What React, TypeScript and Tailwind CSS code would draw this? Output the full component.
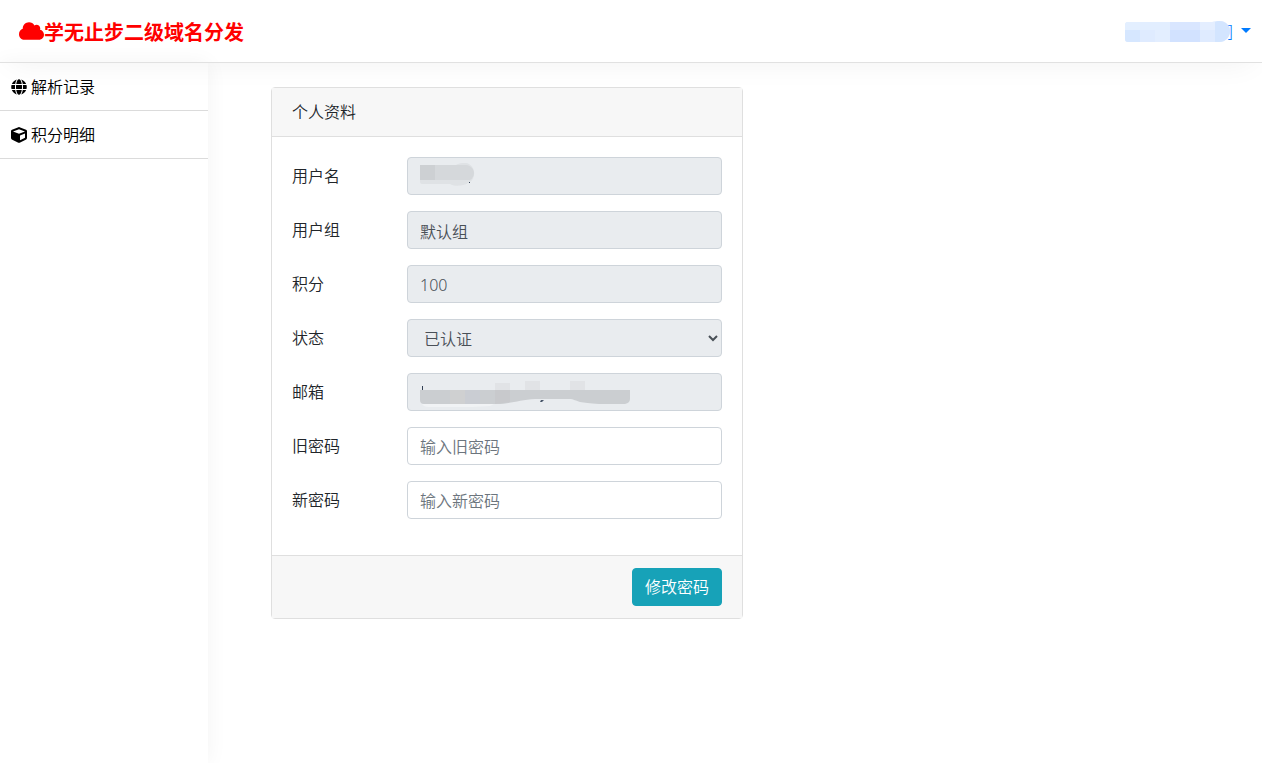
import React from 'react'
import { FaCloud, FaCube, FaGlobe } from 'react-icons/fa'

const control =
  'block w-full h-[38px] rounded border border-[#ced4da] bg-white px-3 pt-[7px] pb-[5px] text-base font-[350] leading-6 text-[#495057] placeholder:text-[#6c757d] placeholder:opacity-100 disabled:bg-[#e9ecef] disabled:opacity-100'

const links = [
  { label: '解析记录', href: '#records', icon: FaGlobe },
  { label: '积分明细', href: '#points', icon: FaCube },
]

function UserMask() {
  return (
    <svg width="105" height="21" viewBox="0 0 105 21" aria-hidden="true">
      <path d="M3 1h84c2-1 6-1 8-1 6 0 10 5 10 10s-4 11-11 11H3q-3 0-3-3V4q0-3 3-3z" fill="#dfebff" />
      <path d="M3 1h12v8H0V4q0-3 3-3z" fill="#e3efff" />
      <path d="M0 9h15v12H3q-3 0-3-3z" fill="#d6e7ff" />
      <path d="M15 1h30v8H15z" fill="#e2eeff" />
      <path d="M30 9h15v12H30z" fill="#e3eeff" />
      <path d="M45 1h30v8H45z" fill="#d9e6ff" />
      <path d="M45 9h30v12H45z" fill="#d2e2ff" />
      <path d="M75 1h15v8H75z" fill="#e4eeff" />
      <path d="M90 1c7-3 15 2 15 9 0 6-4 11-11 11h-4z" fill="#d3e5ff" />
    </svg>
  )
}

function NameMask() {
  return (
    <svg className="absolute left-[13px] top-1.5" width="56" height="24" viewBox="0 0 56 24" aria-hidden="true">
      <path d="M0 2h36c3-2 10-3 13-1 7 4 7 16-1 19-4 3-14 4-18 1H2q-2 0-2-2z" fill="#dfe2e5" />
      <path d="M0 2h46c4 0 8 4 8 8 0 3-2 6-4 7H0z" fill="#d5d8db" />
      <path d="M0 2h15v15H0z" fill="#cdd0d3" />
      <path d="M49 19h1v1h-1z" fill="#334155" />
    </svg>
  )
}

function MailMask() {
  return (
    <svg className="absolute left-[13px] top-1.5" width="212" height="30" viewBox="0 0 212 30" aria-hidden="true">
      <path d="M2 25h72l-4 2-18 1H8q-4 0-6-3z" fill="#f1f3f5" />
      <path d="M75 4h15v7H75zM105 2h15v9h-15zM150 2h15v9h-15z" fill="#e1e3e6" />
      <path d="M2 7h1v4H2z" fill="#334155" />
      <path d="M0 11h210v9q0 4-5 5h-26c-10-1-14-1-19-2-4-1-6-3-11-3h-34c-16 1-26 5-38 5H4q-4 0-4-4z" fill="#cbced1" />
      <path d="M30 11h15v14H30z" fill="#cfd0d1" />
      <path d="M45 11h15v14H45z" fill="#cacdd3" />
      <path d="M75 11h15v12l-15 2z" fill="#c8c9cc" />
      <path d="M121 21h3l-2 2h-2z" fill="#475569" />
    </svg>
  )
}

function Row(props: { id: string; label: string; children: React.ReactNode }) {
  return (
    <div className="-mx-[15px] mb-4 flex">
      <label htmlFor={props.id} className="w-1/4 px-[15px] py-[7px] leading-6">
        {props.label}
      </label>
      <div className="w-3/4 px-[15px]">
        <div className="relative">{props.children}</div>
      </div>
    </div>
  )
}

export default function App() {
  return (
    <div
      className="flex min-h-screen flex-col bg-white text-base font-[350] text-[#212529]"
      style={{ fontFamily: '"Noto Sans", "Noto Sans CJK SC", sans-serif' }}
    >
      <header className="relative z-10 flex h-[63px] items-center justify-between border-b border-[#e1e1e1] pl-[19px] pr-[11px] shadow-[0_10px_30px_-10px_rgba(0,0,0,0.06)]">
        <a href="#home" className="flex items-center text-xl font-bold text-[#ff0000]">
          <FaCloud className="h-5 w-[25px]" />
          <span className="pt-1">学无止步二级域名分发</span>
        </a>
        <button type="button" aria-label="用户菜单" className="flex items-center text-[#007bff]">
          <UserMask />
          <span className="-ml-0.5">]</span>
          <svg className="mb-0.5 ml-2" width="10" height="5" viewBox="0 0 10 5" aria-hidden="true">
            <path d="M0 0h10L5 5z" fill="currentColor" />
          </svg>
        </button>
      </header>
      <div className="flex flex-1">
        <nav className="w-52 shrink-0 shadow-[0_0_20px_rgba(0,0,0,0.05)]">
          {links.map((link) => (
            <a
              key={link.href}
              href={link.href}
              className="flex h-12 items-center gap-1 border-b border-[#dbdbdb] px-[11px] text-black"
            >
              <link.icon className="h-4 w-4" />
              {link.label}
            </a>
          ))}
        </nav>
        <main className="flex-1 pl-12 pr-0.5 pt-6">
          <div className="w-1/2 px-[15px]">
            <form className="rounded border border-[#dfdfdf]">
              <h1 className="border-b border-[#dfdfdf] bg-[#f7f7f7] px-5 py-3 font-[350] leading-6">个人资料</h1>
              <div className="p-5">
                <Row id="username" label="用户名">
                  <input id="username" className={control} disabled />
                  <NameMask />
                </Row>
                <Row id="group" label="用户组">
                  <input id="group" className={control} defaultValue="默认组" disabled />
                </Row>
                <Row id="points" label="积分">
                  <input id="points" className={control} defaultValue="100" disabled />
                </Row>
                <Row id="status" label="状态">
                  <select id="status" className={control} disabled>
                    <option>已认证</option>
                  </select>
                </Row>
                <Row id="email" label="邮箱">
                  <input id="email" className={control} disabled />
                  <MailMask />
                </Row>
                <Row id="old-password" label="旧密码">
                  <input id="old-password" type="password" className={control} placeholder="输入旧密码" />
                </Row>
                <Row id="new-password" label="新密码">
                  <input id="new-password" type="password" className={control} placeholder="输入新密码" />
                </Row>
              </div>
              <div className="flex justify-end border-t border-[#dfdfdf] bg-[#f7f7f7] px-5 py-3">
                <button
                  type="button"
                  className="rounded border border-[#17a2b8] bg-[#17a2b8] px-3 py-1.5 leading-6 text-white"
                >
                  修改密码
                </button>
              </div>
            </form>
          </div>
        </main>
      </div>
    </div>
  )
}
